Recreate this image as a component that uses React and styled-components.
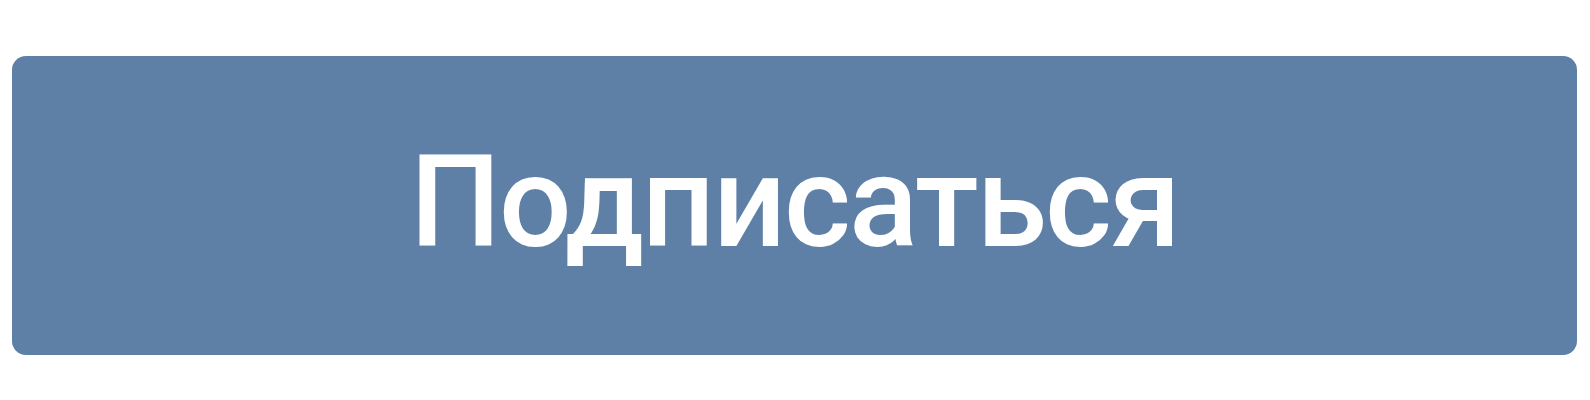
import React from 'react'
import styled, { createGlobalStyle } from 'styled-components'

const GlobalStyle = createGlobalStyle`
  html, body {
    margin: 0;
    padding: 0;
    background: #fff;
  }
`

const Page = styled.div`
  width: 1590px;
  height: 400px;
  box-sizing: border-box;
  padding: 56px 13px 45px 12px;
  display: flex;
`

const SubscribeButton = styled.button`
  flex: 1;
  display: flex;
  align-items: center;
  justify-content: center;
  padding: 0 0 8px;
  border: none;
  border-radius: 14px;
  background: #5e80a6;
  color: #fff;
  font-family: Roboto, 'Noto Sans', sans-serif;
  font-size: 128px;
  font-weight: 500;
  letter-spacing: -2px;
  cursor: pointer;
  outline: none;
`

const App = () => (
  <>
    <GlobalStyle />
    <Page>
      <SubscribeButton>Подписаться</SubscribeButton>
    </Page>
  </>
)

export default App
